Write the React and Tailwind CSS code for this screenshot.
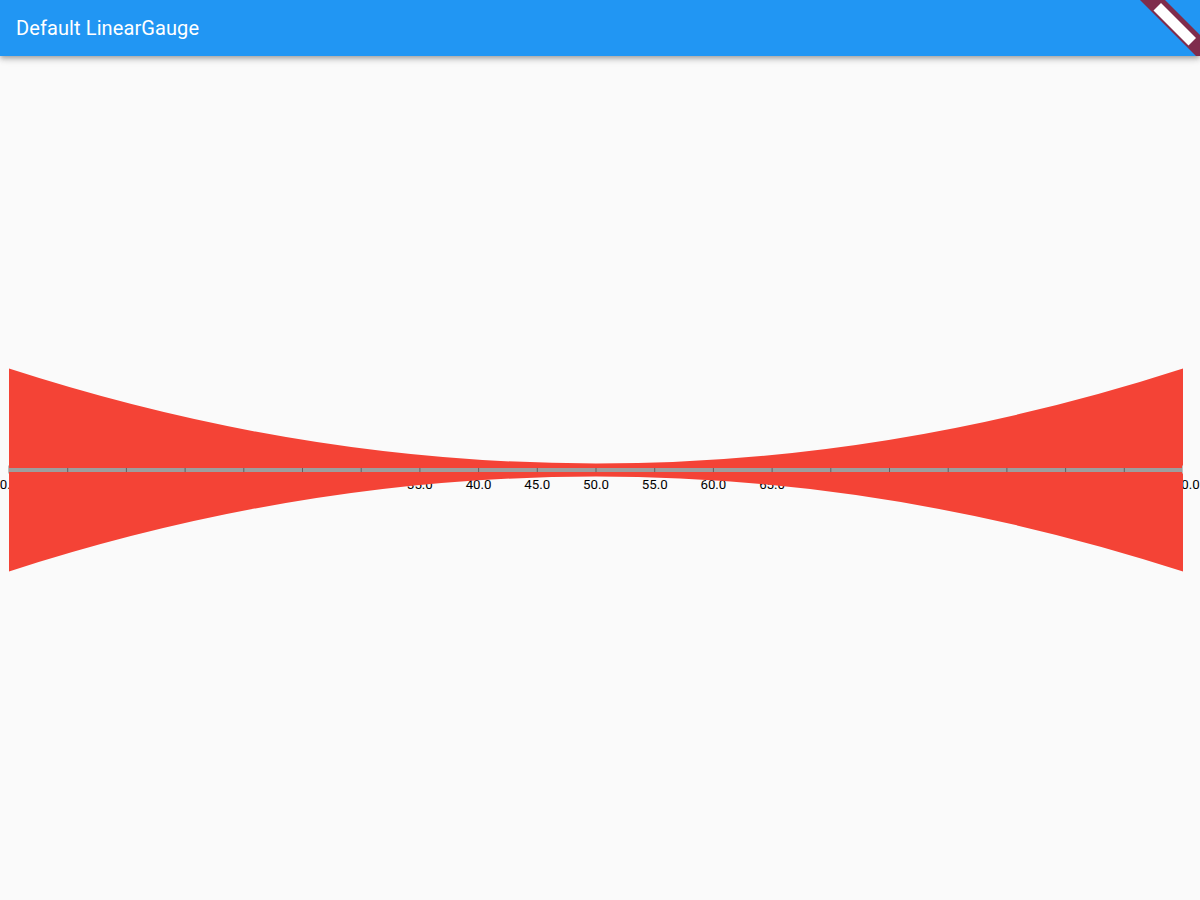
const W = 1200;
const START = 9;
const END = 1183;
const LINE_Y = 112;

const ticks = Array.from({ length: 21 }, (_, i) => ({
  value: i * 5,
  x: START + ((END - START) * i) / 20,
}));

function LinearGauge() {
  const top = LINE_Y - 101.5;
  const bottom = LINE_Y + 101.5;
  const mid = (START + END) / 2;
  // quadratic curves: the gap narrows to ~6px each side at the centre
  const topCtrl = 2 * (LINE_Y - 6.5) - top;
  const botCtrl = 2 * (LINE_Y + 6.5) - bottom;
  const shape = `M ${START} ${top} Q ${mid} ${topCtrl} ${END} ${top} L ${END} ${bottom} Q ${mid} ${botCtrl} ${START} ${bottom} Z`;

  return (
    <svg width={W} height="240" viewBox={`0 0 ${W} 240`} className="block">
      {ticks.map((t) => (
        <text
          key={t.value}
          x={t.x}
          y={LINE_Y + 18.5}
          textAnchor="middle"
          fontSize="13.3"
          fill="#000"
          style={{ fontFamily: "Roboto, 'Liberation Sans', sans-serif" }}
        >
          {t.value.toFixed(1)}
        </text>
      ))}
      <path d={shape} fill="#F44336" />
      <rect x={START} y={LINE_Y - 2} width={END - START} height="4" fill="#9E9E9E" />
      {ticks.map((t, i) =>
        i === 0 || i === 20 ? (
          <rect key={t.value} x={t.x - 1} y={LINE_Y - 4.5} width="1" height="8" fill="#BDBDBD" />
        ) : (
          <rect key={t.value} x={t.x - 0.5} y={LINE_Y - 2} width="1" height="4" fill="#616161" />
        )
      )}
    </svg>
  );
}

export default function App() {
  return (
    <div className="relative h-[900px] w-[1200px] overflow-hidden bg-[#fafafa] flex flex-col" style={{ fontFamily: "Roboto, 'Liberation Sans', sans-serif" }}>
      <header className="h-14 shrink-0 bg-[#2196f3] flex items-center px-4 shadow-[0_2px_4px_-1px_rgba(0,0,0,0.2),0_4px_5px_0_rgba(0,0,0,0.14),0_1px_10px_0_rgba(0,0,0,0.12)] z-10">
        <h1 className="text-white text-[20px] font-normal tracking-[0.1px]">Default LinearGauge</h1>
      </header>
      <main className="flex-1 flex flex-col justify-center">
        <LinearGauge />
      </main>
      <svg className="absolute top-0 right-0 z-20" width="60" height="56" viewBox="1140 0 60 56">
        <polygon points="1140,0 1165,0 1200,35 1200,56 1196,56" fill="#7f2d4c" />
        <polygon points="1153.5,10.5 1161,3 1196,38 1188.5,45.5" fill="#fff" />
      </svg>
    </div>
  );
}
